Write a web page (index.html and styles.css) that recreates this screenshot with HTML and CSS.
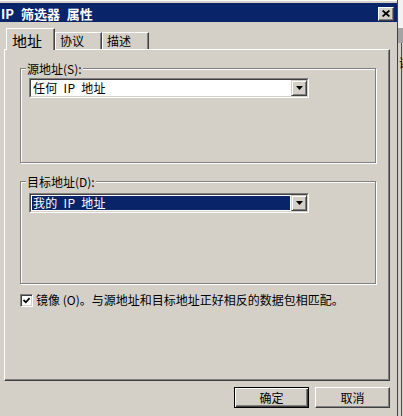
FILE: index.html
```html
<!DOCTYPE html>
<html lang="zh-CN">
<head>
<meta charset="utf-8">
<title>IP 筛选器 属性</title>
<link rel="stylesheet" href="styles.css">
</head>
<body>
<div class="screen">
  <div class="window">
    <div class="titlebar">
      <span class="title">IP 筛选器 属性</span>
      <span class="close">
        <svg width="8" height="7" viewBox="0 0 8 7"><path d="M0.6 0.5 L7.4 6.5 M7.4 0.5 L0.6 6.5" stroke="#000" stroke-width="1.7" fill="none"/></svg>
      </span>
    </div>
    <div class="content">
      <div class="tabs">
        <div class="tab tab-active">地址</div>
        <div class="tab">协议</div>
        <div class="tab">描述</div>
      </div>
      <div class="panel">
        <div class="group group-src">
          <div class="legend">源地址(S):</div>
          <div class="combo combo-src">
            <div class="combo-inner">
              <div class="combo-field">任何 IP 地址</div>
              <div class="combo-btn"><svg width="7" height="4" viewBox="0 0 7 4"><polygon points="0,0 7,0 3.5,4" fill="#000"/></svg></div>
            </div>
          </div>
        </div>
        <div class="group group-dst">
          <div class="legend">目标地址(D):</div>
          <div class="combo combo-dst">
            <div class="combo-inner">
              <div class="combo-field combo-field-selected">我的 IP 地址</div>
              <div class="combo-btn"><svg width="7" height="4" viewBox="0 0 7 4"><polygon points="0,0 7,0 3.5,4" fill="#000"/></svg></div>
            </div>
          </div>
        </div>
        <div class="check-row">
          <span class="checkbox"><svg width="7" height="7" viewBox="0 0 7 7"><path d="M0.5 3 L2.8 5.3 L6.6 1.2" stroke="#000" stroke-width="1.8" fill="none"/></svg></span>
          <span class="check-label">镜像 (O)。与源地址和目标地址正好相反的数据包相匹配。</span>
        </div>
      </div>
      <div class="buttons">
        <button class="btn btn-default">确定</button>
        <button class="btn">取消</button>
      </div>
    </div>
  </div>
  <div class="strip">
    <div class="strip-top"></div>
    <div class="strip-bar"></div>
    <div class="strip-rest"><span class="strip-glyph">谢</span></div>
  </div>
</div>
</body>
</html>
```
FILE: styles.css
```css
html, body {
  margin: 0;
  padding: 0;
  background: #d4d0c8;
}

body {
  font-family: "Noto Sans CJK SC", "Liberation Sans", sans-serif;
  font-size: 12px;
  color: #000;
}

.screen {
  display: flex;
  width: 403px;
  height: 416px;
  overflow: hidden;
}

.window {
  width: 398px;
  height: 416px;
  box-sizing: border-box;
  flex: none;
  background: #d4d0c8;
  border-right: 1px solid #404040;
  padding-top: 3px;
  box-shadow: inset 0 1px 0 #ffffff;
}

.titlebar {
  height: 19px;
  background: #0a246a;
  color: #fff;
  display: flex;
  align-items: center;
  justify-content: space-between;
  padding: 0 3px 0 1px;
}

.title {
  font-weight: bold;
  font-size: 13px;
  line-height: 15px;
  padding-top: 2px;
  white-space: pre;
  word-spacing: 4px;
}

.close {
  width: 16px;
  height: 14px;
  box-sizing: border-box;
  margin-top: 2px;
  background: #d4d0c8;
  border: 1px solid;
  border-color: #ffffff #404040 #404040 #ffffff;
  box-shadow: inset -1px -1px 0 #808080;
  display: flex;
  align-items: center;
  justify-content: center;
}

.close svg {
  display: block;
}

.content {
  padding: 6px 7px 0 4px;
}

.tabs {
  display: flex;
  align-items: flex-end;
  height: 21px;
  margin-left: 2px;
}

.tab {
  box-sizing: border-box;
  width: 47px;
  height: 17px;
  border: 1px solid #ffffff;
  border-bottom: none;
  border-right-color: #404040;
  box-shadow: inset -1px 0 0 #808080;
  font-size: 12px;
  line-height: 14px;
  padding: 1px 0 0 4px;
  background: #d4d0c8;
}

.tab-active {
  width: 49px;
  height: 22px;
  margin-bottom: -1px;
  position: relative;
  z-index: 1;
  font-size: 15px;
  line-height: 17px;
  padding: 3px 0 0 5px;
}

.panel {
  box-sizing: border-box;
  height: 332px;
  border: 1px solid;
  border-color: #ffffff #404040 #404040 #ffffff;
  box-shadow: inset -1px -1px 0 #808080;
  padding: 18px 13px 0 15px;
}

.group {
  box-sizing: border-box;
  border: 1px solid #808080;
  box-shadow: inset 1px 1px 0 #ffffff, 1px 1px 0 #ffffff;
  padding-left: 8px;
}

.group-src {
  height: 95px;
}

.group-dst {
  height: 103px;
  margin-top: 18px;
}

.legend {
  width: fit-content;
  margin: -7px 0 0 -3px;
  padding: 0 1px;
  background: #d4d0c8;
  line-height: 14px;
  white-space: pre;
}

.combo {
  width: 280px;
  height: 20px;
  box-sizing: border-box;
  border: 1px solid;
  border-color: #808080 #ffffff #ffffff #808080;
}

.combo-src {
  margin-top: 2px;
}

.combo-dst {
  margin-top: 4px;
}

.combo-inner {
  height: 100%;
  box-sizing: border-box;
  border: 1px solid;
  border-color: #404040 #d4d0c8 #d4d0c8 #404040;
  background: #ffffff;
  display: flex;
}

.combo-field {
  flex: 1;
  padding: 0 2px;
  line-height: 16px;
  white-space: pre;
  word-spacing: 3px;
  letter-spacing: 0.3px;
}

.combo-field-selected {
  margin: 1px;
  padding: 0 1px;
  line-height: 14px;
  background: #0a246a;
  color: #ffffff;
}

.combo-btn {
  width: 16px;
  box-sizing: border-box;
  background: #d4d0c8;
  border: 1px solid;
  border-color: #d4d0c8 #404040 #404040 #d4d0c8;
  box-shadow: inset 1px 1px 0 #ffffff, inset -1px -1px 0 #808080;
  display: flex;
  align-items: center;
  justify-content: center;
}

.combo-btn svg {
  display: block;
}

.check-row {
  display: flex;
  align-items: center;
  gap: 3px;
  margin-top: 9px;
  line-height: 14px;
}

.checkbox {
  width: 13px;
  height: 13px;
  box-sizing: border-box;
  border: 1px solid;
  border-color: #808080 #ffffff #ffffff #808080;
  box-shadow: inset 1px 1px 0 #404040, inset -1px -1px 0 #d4d0c8;
  background: #ffffff;
  display: flex;
  align-items: center;
  justify-content: center;
  flex: none;
}

.checkbox svg {
  display: block;
}

.check-label {
  white-space: nowrap;
}

.buttons {
  display: flex;
  justify-content: flex-end;
  gap: 6px;
  margin-top: 6px;
}

.btn {
  width: 75px;
  height: 21px;
  box-sizing: border-box;
  padding: 0;
  margin: 0;
  font-family: "Noto Sans CJK SC", "Liberation Sans", sans-serif;
  font-size: 12px;
  line-height: 14px;
  color: #000;
  background: #d4d0c8;
  border: 1px solid;
  border-color: #ffffff #404040 #404040 #ffffff;
  box-shadow: inset -1px -1px 0 #808080;
}

.btn-default {
  border: 1px solid #000000;
  box-shadow: inset 1px 1px 0 #ffffff, inset -1px -1px 0 #404040, inset -2px -2px 0 #808080;
}

.strip {
  width: 5px;
  flex: none;
  display: flex;
  flex-direction: column;
}

.strip-top {
  height: 28px;
  background: #f2f2f2;
}

.strip-bar {
  height: 15px;
  background: #a4a4a4;
}

.strip-rest {
  flex: 1;
  background: #d4d0c8;
  overflow: hidden;
  padding-top: 13px;
  box-shadow: inset -1px 0 0 #d4d0c8, inset -2px 0 0 #505050;
}

.strip-glyph {
  display: block;
  margin-left: 1px;
  line-height: 14px;
  white-space: nowrap;
}
```
